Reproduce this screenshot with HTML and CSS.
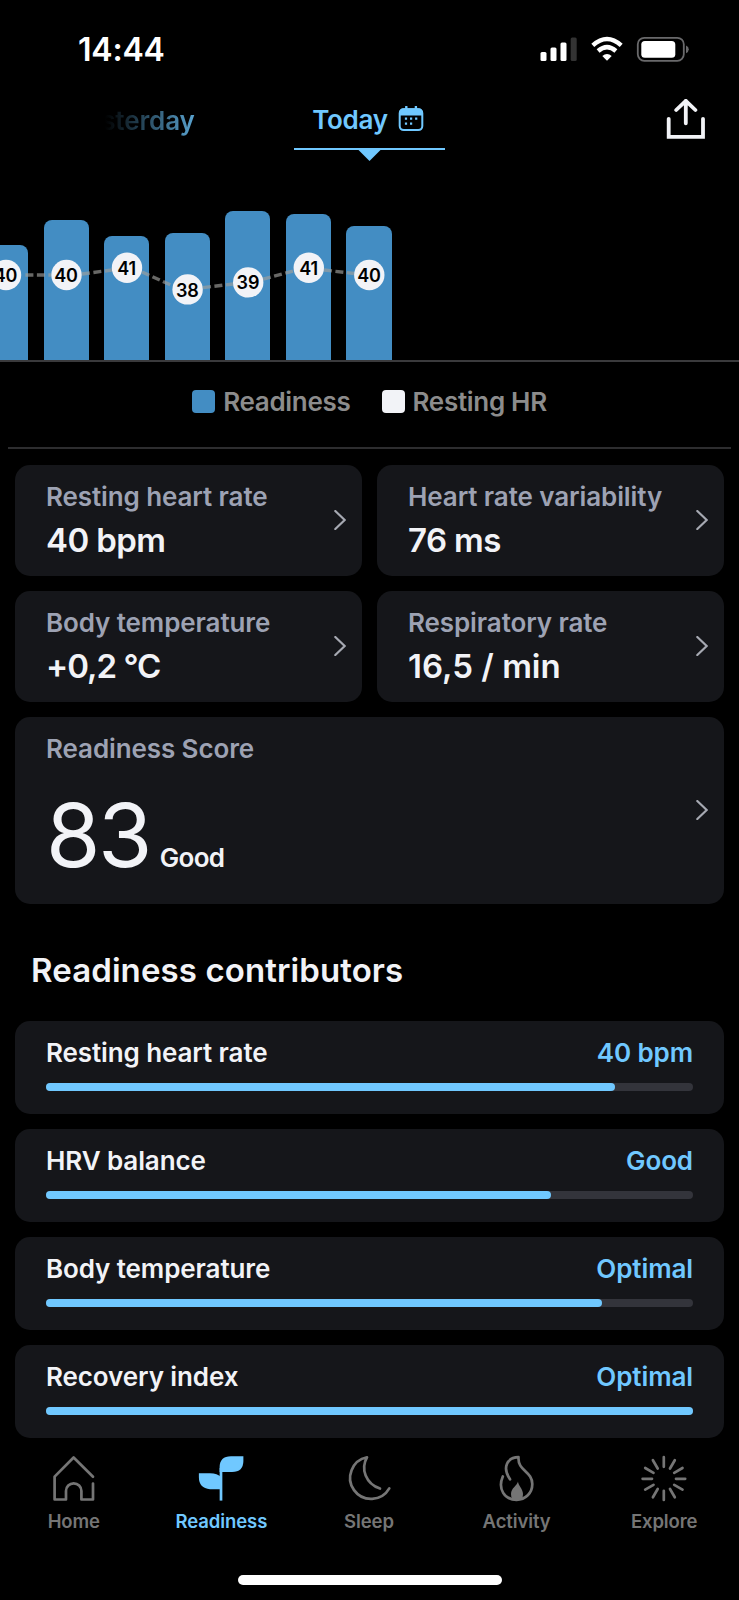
FILE: index.html
```html
<!DOCTYPE html>
<html lang="en">
<head>
    <meta charset="UTF-8">
    <meta name="viewport" content="width=device-width, initial-scale=1.0">
    <title>Readiness</title>
    <link rel="stylesheet" href="styles.css">
</head>
<body>
    <div class="app">
        <div class="status-bar">
            <span class="time">14:44</span>
            <svg class="status-icons" width="150" height="28" viewBox="0 0 150 28">
                <g fill="#fff">
                    <rect x="1.5" y="16" width="6" height="9" rx="1.5"/>
                    <rect x="11.5" y="11.5" width="6" height="13.5" rx="1.5"/>
                    <rect x="21.5" y="6.5" width="6" height="18.5" rx="1.5"/>
                    <rect x="31.7" y="1.5" width="6" height="23.5" rx="1.5" fill="#333"/>
                    <path d="M68 24.7 L63.3 20 Q68 15.8 72.7 20 Z"/>
                </g>
                <g fill="none" stroke="#fff" stroke-width="4.4">
                    <path d="M53.8 9.3 Q68 -3.3 82.2 9.3"/>
                    <path d="M59.1 15 Q68 7.2 76.9 15"/>
                </g>
                <rect x="98.8" y="1.8" width="46" height="23" rx="6.5" fill="none" stroke="#69696b" stroke-width="1.8"/>
                <rect x="102.3" y="5" width="34" height="16.8" rx="3.6" fill="#fff"/>
                <path d="M147 9.5 Q149.8 10.5 149.8 13.3 Q149.8 16 147 17.2 Z" fill="#69696b"/>
            </svg>
        </div>

        <div class="day-tabs">
            <div class="side-tab"><span class="yesterday">Yesterday</span></div>
            <div class="tab active">
                <div class="tab-label">
                    <span>Today</span>
                    <svg width="26" height="26" viewBox="0 0 26 26">
                        <rect x="1.7" y="3.2" width="22.6" height="20.9" rx="4" fill="none" stroke="#70c8ff" stroke-width="2"/>
                        <path d="M1 9.5 V7 Q1 2.2 6 2.2 H20 Q25 2.2 25 7 V9.5 Z" fill="#70c8ff"/>
                        <path d="M8.3 0.8 V4 M17.9 0.8 V4" stroke="#70c8ff" stroke-width="2.4" stroke-linecap="round"/>
                        <path d="M6.9 12.6 h2.2 m2.9 0 h2.2 m2.9 0 h2.2 M6.9 17.6 h2.2 m2.9 0 h2.2" stroke="#70c8ff" stroke-width="2.2"/>
                    </svg>
                </div>
                <div class="tab-line"></div>
                <div class="tab-arrow"></div>
            </div>
            <div class="side-tab share">
                <svg width="40" height="42" viewBox="0 0 40 42" fill="none" stroke="#f2f3f7" stroke-width="3.8" stroke-linecap="round">
                    <path d="M2.7 19.8 V37.8 H37 V19.8" stroke-linejoin="miter"/>
                    <path d="M19.8 24.3 V1.8 M10.2 11 L19.8 1.8 L29.4 11" stroke-linejoin="round"/>
                </svg>
            </div>
        </div>

        <div class="chart">
            <div class="bars">
                <div class="bar" style="height: 115px"></div>
                <div class="bar" style="height: 140px"></div>
                <div class="bar" style="height: 124px"></div>
                <div class="bar" style="height: 127.5px"></div>
                <div class="bar" style="height: 149.5px"></div>
                <div class="bar" style="height: 146px"></div>
                <div class="bar" style="height: 134px"></div>
            </div>
            <svg class="hr-line" width="739" height="162" viewBox="0 0 739 162">
                <path class="trend" d="M25.4 75 H51 M82 74 L112 70 M142 72 L173 86 M203 87.6 L233 84 M263 79.2 L293 71 M324 70 L354 73.5"/>
                <g class="points">
                    <circle cx="6" cy="75" r="15.2"/>
                    <circle cx="66.5" cy="75" r="15.2"/>
                    <circle cx="127" cy="67.7" r="15.2"/>
                    <circle cx="187.6" cy="89.4" r="15.2"/>
                    <circle cx="248.2" cy="82.4" r="15.2"/>
                    <circle cx="308.8" cy="67.7" r="15.2"/>
                    <circle cx="369.3" cy="75" r="15.2"/>
                </g>
                <g class="point-labels">
                    <text x="5.5" y="82">40</text>
                    <text x="66" y="82">40</text>
                    <text x="126.7" y="75">41</text>
                    <text x="187.4" y="96.5">38</text>
                    <text x="248" y="89">39</text>
                    <text x="308.6" y="75">41</text>
                    <text x="369" y="82">40</text>
                </g>
            </svg>
        </div>

        <div class="legend">
            <div class="legend-item"><i class="swatch readiness"></i><span>Readiness</span></div>
            <div class="legend-item"><i class="swatch hr"></i><span>Resting HR</span></div>
        </div>

        <div class="cards">
            <div class="card">
                <div>
                    <div class="label">Resting heart rate</div>
                    <div class="value">40 bpm</div>
                </div>
                <svg class="chevron" viewBox="0 0 12 20"><path d="M1.3 1 L10.7 10 L1.3 19"/></svg>
            </div>
            <div class="card">
                <div>
                    <div class="label">Heart rate variability</div>
                    <div class="value">76 ms</div>
                </div>
                <svg class="chevron" viewBox="0 0 12 20"><path d="M1.3 1 L10.7 10 L1.3 19"/></svg>
            </div>
            <div class="card">
                <div>
                    <div class="label">Body temperature</div>
                    <div class="value tight">+0,2 °C</div>
                </div>
                <svg class="chevron" viewBox="0 0 12 20"><path d="M1.3 1 L10.7 10 L1.3 19"/></svg>
            </div>
            <div class="card">
                <div>
                    <div class="label">Respiratory rate</div>
                    <div class="value loose">16,5 / min</div>
                </div>
                <svg class="chevron" viewBox="0 0 12 20"><path d="M1.3 1 L10.7 10 L1.3 19"/></svg>
            </div>
            <div class="card score-card">
                <div>
                    <div class="label">Readiness Score</div>
                    <div class="score"><span class="score-number">83</span><span class="score-text">Good</span></div>
                </div>
                <svg class="chevron" viewBox="0 0 12 20"><path d="M1.3 1 L10.7 10 L1.3 19"/></svg>
            </div>
        </div>

        <h2 class="section-title">Readiness contributors</h2>

        <div class="contributors">
            <div class="contributor">
                <div class="row"><span>Resting heart rate</span><span class="result">40 bpm</span></div>
                <div class="track"><div class="fill" style="width: 88%"></div></div>
            </div>
            <div class="contributor">
                <div class="row"><span>HRV balance</span><span class="result">Good</span></div>
                <div class="track"><div class="fill" style="width: 78%"></div></div>
            </div>
            <div class="contributor">
                <div class="row"><span>Body temperature</span><span class="result">Optimal</span></div>
                <div class="track"><div class="fill" style="width: 86%"></div></div>
            </div>
            <div class="contributor">
                <div class="row"><span>Recovery index</span><span class="result">Optimal</span></div>
                <div class="track"><div class="fill" style="width: 100%"></div></div>
            </div>
        </div>

        <nav class="bottom-nav">
            <div class="nav-item">
                <svg viewBox="0 0 48 48"><path d="M43 22.8 L23.6 3.5 L4.6 22.6 V45.5 H16 V37 A7.7 7.7 0 0 1 31.4 37 V45.5 H43 V29.5"/></svg>
                <span>Home</span>
            </div>
            <div class="nav-item active">
                <svg viewBox="0 0 48 48">
                    <path class="solid" d="M22.6 18 V13.5 Q22.6 2.2 34 2.2 H46.4 V6.5 Q46.4 18 35 18 Z"/>
                    <path class="solid" d="M24 35.2 H13 Q1.9 34 1.9 23.5 V19.2 H13 Q20.5 19.2 24 23 Z"/>
                    <path class="stem" d="M24 14 V46.6"/>
                </svg>
                <span>Readiness</span>
            </div>
            <div class="nav-item">
                <svg viewBox="0 0 48 48"><path d="M44.3 34.4 A21 21 0 1 1 22 3.3 C15.3 15 20.8 29.5 35 34.6"/></svg>
                <span>Sleep</span>
            </div>
            <div class="nav-item">
                <svg viewBox="0 0 48 48">
                    <path d="M17 25.3 C9 13.5 14 3.5 25.5 3.2 C24.5 17 39.3 17 39.3 30 C39.3 39 32.5 45.8 23.5 45.8 C11.5 45.8 4.5 35 9.8 22.5"/>
                    <path class="solid" d="M25 27.5 C25 31 30 35 30 40 Q30 43 28.8 45 H19.2 Q18 43 18 40 C18 34 24 32 25 27.5 Z"/>
                </svg>
                <span>Activity</span>
            </div>
            <div class="nav-item">
                <svg viewBox="0 0 48 48"><path d="M23.8 3.2 V12.8 M23.8 36.8 V46 M2.6 24.8 H12 M36 24.8 H45.2 M12.9 6.2 L17.7 14.5 M30 35 L34.8 43.3 M34.8 6.2 L30 14.5 M17.7 35 L12.9 43.3 M5.2 14 L13.5 18.8 M34.2 30.8 L42.5 35.6 M42.5 14 L34.2 18.8 M13.5 30.8 L5.2 35.6"/></svg>
                <span>Explore</span>
            </div>
        </nav>
        <div class="home-indicator"></div>
    </div>
</body>
</html>
```

FILE: styles.css
```css
* {
    margin: 0;
    padding: 0;
    box-sizing: border-box;
}

body {
    font-family: Inter, 'Liberation Sans', sans-serif;
    font-weight: 600;
    font-size: 26px;
    letter-spacing: -0.1px;
    background: #000;
    color: #f2f3f7;
}

svg {
    display: block;
    flex-shrink: 0;
}

.app {
    width: 739px;
    height: 1600px;
    overflow: hidden;
    display: flex;
    flex-direction: column;
}

/* Status bar */
.status-bar {
    height: 99px;
    padding: 0 50px 0 78px;
    display: flex;
    justify-content: space-between;
    align-items: center;
    color: #fff;
}

.time {
    font-size: 32px;
    font-weight: 600;
    line-height: 40px;
    letter-spacing: -0.2px;
}

.status-icons {
    width: 150px;
}

/* Day selector */
.day-tabs {
    height: 101px;
    display: flex;
    justify-content: space-between;
}

.side-tab {
    width: 294px;
    padding-left: 70px;
    line-height: 43px;
}

.yesterday {
    display: inline-block;
    color: transparent;
    background: linear-gradient(90deg, #000 28%, #5aa4d1 100%);
    background-clip: text;
    -webkit-background-clip: text;
}

.tab {
    width: 151px;
    color: #70c8ff;
}

.tab-label {
    height: 49px;
    padding: 0 3px 8px 0;
    display: flex;
    align-items: center;
    justify-content: center;
    gap: 10px;
    letter-spacing: -0.3px;
}

.tab-label svg {
    margin-top: -2px;
}

.tab-line {
    height: 2px;
    background: #70c8ff;
}

.tab-arrow {
    width: 24px;
    height: 12px;
    margin: -1px auto 0;
    background: #70c8ff;
    clip-path: polygon(0 0, 100% 0, 50% 100%);
}

.share {
    display: flex;
    justify-content: flex-end;
    padding: 0 33px 0 0;
}

/* Chart */
.chart {
    position: relative;
    height: 162px;
    border-bottom: 2px solid #3a3a3c;
}

.bars {
    height: 160px;
    margin-left: -17px;
    display: flex;
    align-items: flex-end;
    gap: 15.25px;
}

.bar {
    width: 45.3px;
    background: #438dc3;
    border-radius: 8px 8px 0 0;
}

.hr-line {
    position: absolute;
    top: 0;
    left: 0;
}

.trend {
    fill: none;
    stroke: #a0a09c;
    stroke-opacity: 0.65;
    stroke-width: 3.4;
    stroke-dasharray: 8 3.5;
}

.points {
    fill: #f2f3f7;
}

.point-labels {
    fill: #000;
    font-size: 18px;
    font-weight: 600;
    text-anchor: middle;
}

.legend {
    height: 87px;
    margin: 0 8px;
    border-bottom: 2px solid #2d2d2f;
    display: flex;
    justify-content: center;
    gap: 31px;
    letter-spacing: -0.3px;
    color: #8c8c8c;
}

.legend-item {
    height: 78px;
    display: flex;
    align-items: center;
    gap: 8px;
}

.swatch {
    width: 23px;
    height: 23px;
    border-radius: 4px;
}

.swatch.readiness {
    background: #438dc3;
}

.swatch.hr {
    background: #f2f3f7;
}

/* Metric cards */
.cards {
    display: grid;
    grid-template-columns: 1fr 1fr;
    gap: 15.5px;
    padding: 16px 15.5px 0 15px;
}

.card {
    height: 110.7px;
    padding: 15px 16px 0 31px;
    border-radius: 15px;
    background: #15161a;
    display: flex;
    justify-content: space-between;
}

.label {
    line-height: 33px;
    color: #9da2b3;
    white-space: nowrap;
}

.value {
    margin-top: 7px;
    font-size: 33px;
    line-height: 41px;
    letter-spacing: -0.6px;
}

.value.tight {
    letter-spacing: -1px;
}

.value.loose {
    letter-spacing: 0;
}

.chevron {
    width: 12px;
    height: 20px;
    margin-bottom: 16px;
    align-self: center;
    fill: none;
    stroke: #a6a9b2;
    stroke-width: 2.2;
    stroke-linecap: round;
}

.score-card {
    grid-column: span 2;
    height: 187px;
}

.score {
    margin-top: 21px;
    display: flex;
    align-items: baseline;
    gap: 10px;
    line-height: 99px;
}

.score-number {
    font-size: 88px;
    font-weight: 400;
    letter-spacing: -2.5px;
}

.score-text {
    letter-spacing: -0.7px;
}

.section-title {
    height: 117px;
    padding: 0 31px;
    font-size: 33px;
    font-weight: 600;
    line-height: 133px;
    letter-spacing: 0.1px;
}

/* Contributors */
.contributors {
    display: flex;
    flex-direction: column;
    gap: 15px;
    padding: 0 15.5px 0 15px;
}

.contributor {
    height: 93px;
    padding: 15px 30.5px 0 31px;
    border-radius: 15px;
    background: #15161a;
}

.row {
    display: flex;
    justify-content: space-between;
    line-height: 34px;
}

.result {
    color: #70c8ff;
}

.track {
    height: 8px;
    margin-top: 13px;
    border-radius: 4px;
    background: #33343b;
}

.fill {
    height: 8px;
    border-radius: 4px;
    background: #70c8ff;
}

/* Bottom navigation */
.bottom-nav {
    display: flex;
    height: 137px;
    padding: 16px 1px 0 0;
}

.nav-item {
    flex: 1;
    display: flex;
    flex-direction: column;
    align-items: center;
    gap: 7px;
    font-size: 18.5px;
    line-height: 24px;
    color: #757575;
}

.nav-item svg {
    width: 48px;
    height: 48px;
    fill: none;
    stroke: currentColor;
    stroke-width: 2.7;
    stroke-linecap: round;
    stroke-linejoin: round;
}

.nav-item.active {
    color: #70c8ff;
}

.nav-item .solid {
    fill: currentColor;
    stroke: none;
}

.nav-item .stem {
    stroke-linecap: butt;
}

.home-indicator {
    width: 264px;
    height: 10px;
    margin: 0 auto;
    border-radius: 5px;
    background: #fff;
}
```
